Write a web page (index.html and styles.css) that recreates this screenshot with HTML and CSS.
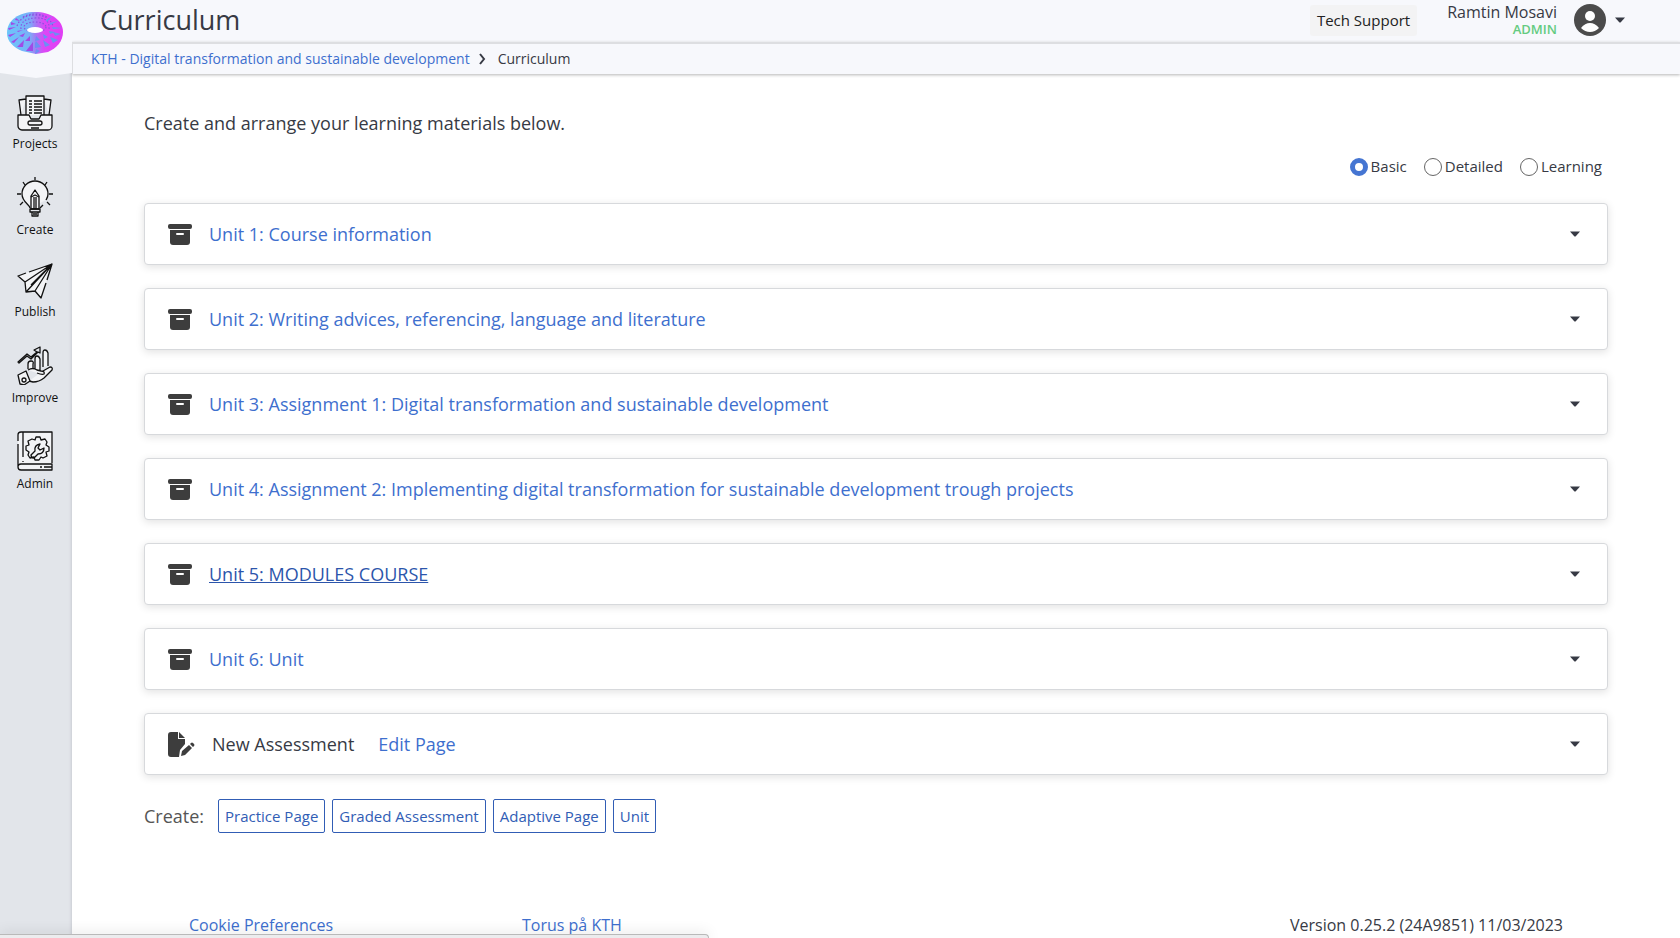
FILE: index.html
```html
<!DOCTYPE html>
<html lang="en">
<head>
<meta charset="utf-8">
<title>Curriculum</title>
<link rel="stylesheet" href="styles.css">
</head>
<body>
<svg class="sprite" aria-hidden="true">
  <symbol id="archive" viewBox="0 0 24 21"><rect x="0" y="0" width="24" height="5" rx="2"/><path d="M2 6h20v12a3 3 0 0 1-3 3H5a3 3 0 0 1-3-3z"/><rect class="slot" x="8" y="9" width="8" height="2" rx="1"/></symbol>
  <symbol id="caret" viewBox="0 0 10 6"><path d="M0 0.500h10L6 5Q5 6 4 5z"/></symbol>
</svg>
<div class="app">
  <aside class="sidebar">
    <a class="brand" href="#" aria-label="Home">
      <svg class="logo" viewBox="0 0 56 44">
        <defs>
          <linearGradient id="torus"><stop offset="0" stop-color="#6cc6fa"/><stop offset=".4" stop-color="#78b0f8"/><stop offset=".52" stop-color="#a877f4"/><stop offset=".66" stop-color="#dc48f6"/><stop offset="1" stop-color="#e23cf4"/></linearGradient>
        </defs>
        <path d="M28 1C44 1 56 9 56 21c0 9-6 16-15 20l-12 2-14-3C6 36 0 30 0 22 0 9 12 1 28 1z" fill="url(#torus)"/>
        <g fill="none" stroke="#8a52e0" stroke-width="1.200" stroke-dasharray="1.500 1.800">
          <ellipse cx="28" cy="16" rx="11" ry="5"/><path d="M14 18Q13 8 28 7t14 11M10 15Q14 4 28 4t18 11M16 6Q28 0 40 6"/>
        </g>
        <g fill="#a04ae6">
          <path d="M1 17l8-1-7 3zM1 24l8-2-6 4zM4 31l8-5-5 6zM10 36l7-7-1 7zM19 40l7-9v9zM12 25l6-3-2 4zM18 30l5-5v5zM10 20l6-1-5 2zM4 11l5 2-5 1zM9 7l4 3-5-1z"/>
        </g>
        <g fill="#6b8ff4">
          <path d="M28 32l1-2 5 6-6 1zM36 29l7 5-5 2zM43 26l8 3-5 3zM46 21l8 2-6 2zM29 25l4 4-5 1zM36 23l5 3-4 2zM42 20l6 1-5 2zM45 16l10 1-9 1zM43 12l8-2-8 4zM39 9l6-4-5 6zM29 38l4 2-5 3z"/>
        </g>
        <ellipse cx="28" cy="19" rx="8" ry="3" fill="#fff"/>
      </svg>
    </a>
    <nav class="nav">
      <a class="nav-item" href="#">
        <svg viewBox="0 0 36 36" class="line"><path class="pale" d="M9 20V1h18v19M9 4L2 5l2 15M27 4l7 1-2 15M1 20h11l2 4h8l2-4h11v11a4 4 0 0 1-4 4H5a4 4 0 0 1-4-4z"/><path d="M12 6h3M17 6h8M12 9h3M17 9h8M12 12h3M17 12h8M12 15h3M17 15h8M12 18h3M17 18h8M14 33h8"/><rect x="11" y="26" width="14" height="4" rx="2"/></svg>
        <span>Projects</span>
      </a>
      <a class="nav-item nav-create" href="#">
        <svg viewBox="0 0 36 40" class="line"><path class="pale" d="M13 31c0-3-8-6-8-14a13 13 0 0 1 26 0c0 3-1 4-2 6M26 28l-3 3"/><path d="M18 0v3M6 5l2 3M30 5l-2 3M0 17h4M32 17h4M3 28l3-3M33 28l-3-3"/><path class="pale" d="M14 32V19l4-6 4 6v13zM17 20v12M19 20v12"/><path d="M14 20l4-2 4 2M17 14h2M13 32h10v3H13zM15 35h6v4h-6zM16 37h4"/></svg>
        <span>Create</span>
      </a>
      <a class="nav-item nav-publish" href="#">
        <svg viewBox="0 0 36 36" class="line"><path class="pale" stroke="none" d="M35 1L1 13l7 6 1 10 9-1 6 7z"/><path d="M12 9L35 1 30 17M29 20l-5 15-6-7-9 1-1-10-7-6 8-3M35 1L8 19M35 1L9 29M35 1L18 28M35 1L14 22"/></svg>
        <span>Publish</span>
      </a>
      <a class="nav-item nav-improve" href="#">
        <svg viewBox="0 0 36 40" class="line"><path d="M1 17l9-8 4 3 6-5-3-2 6-3v6l-2-1-7 7-4-3-8 7z"/><path class="pale" d="M11 24v-5q0-3 3-3t2 3v5M18 24V14q0-3 2-3t3 3v11M26 22V8q0-3 2-3t3 3v13M11 25q5-3 9 0l4 1q4 0 3 3-2 1-7-1M26 26l7-4q3 0 2 3l-8 8q-5 4-11 4l-4-1"/><path class="pale" d="M1 30l8-4 4 10-6 4-4-1z"/><circle cx="7" cy="35" r="2"/></svg>
        <span>Improve</span>
      </a>
      <a class="nav-item nav-admin" href="#">
        <svg viewBox="0 0 36 40" class="line"><path class="pale" stroke="none" d="M35 1H4a3 3 0 0 0-3 3v32a3 3 0 0 0 3 3h31z"/><path d="M35 32V1H4a3 3 0 0 0-3 3v6M1 13v23a3 3 0 0 0 3 3h31v-6H4a3 3 0 0 0-3 3M6 1v25M6 30v1M23 36h2M27 36h8"/><path d="M19 6h4l1 3 4-1 2 3-1 3 3 2v4l-3 1 1 4-4 2-2-1-2 3h-4l-1-3-4 1-2-3 1-3-3-2v-4l3-1-1-4 4-2 3 1z"/><path d="M14 24l4-4q-1-6 5-7l-2 4 2 2 4-2q0 6-6 6l-4 4q-3 0-3-3z"/></svg>
        <span>Admin</span>
      </a>
    </nav>
  </aside>
  <div class="main">
    <header class="topbar">
      <h1 class="title">Curriculum</h1>
      <div class="account">
        <button class="support" type="button">Tech Support</button>
        <div class="who"><span class="name">Ramtin Mosavi</span><span class="role">ADMIN</span></div>
        <button class="avatar" type="button" aria-label="Account menu">
          <svg class="face" viewBox="0 0 32 32"><circle cx="16" cy="16" r="16" fill="#4b4b4b"/><circle cx="16" cy="12" r="5" fill="#fff"/><path d="M7 24Q11 19 16 19t9 5Q21 28 16 28t-9-4z" fill="#fff"/></svg>
          <svg class="caret"><use href="#caret"/></svg>
        </button>
      </div>
    </header>
    <nav class="crumbs" aria-label="Breadcrumb">
      <a href="#">KTH - Digital transformation and sustainable development</a>
      <svg class="chevron" viewBox="0 0 8 12"><path d="M2 1l4 5-4 5"/></svg>
      <span>Curriculum</span>
    </nav>
    <main class="content">
      <p class="intro">Create and arrange your learning materials below.</p>
      <div class="views">
        <label class="view"><input type="radio" name="view" checked>Basic</label>
        <label class="view"><input type="radio" name="view">Detailed</label>
        <label class="view"><input type="radio" name="view">Learning</label>
      </div>
      <div class="units">
        <div class="card"><svg class="box"><use href="#archive"/></svg><a href="#">Unit 1: Course information</a><button class="more" type="button" aria-label="Options"><svg class="caret"><use href="#caret"/></svg></button></div>
        <div class="card"><svg class="box"><use href="#archive"/></svg><a href="#">Unit 2: Writing advices, referencing, language and literature</a><button class="more" type="button" aria-label="Options"><svg class="caret"><use href="#caret"/></svg></button></div>
        <div class="card"><svg class="box"><use href="#archive"/></svg><a href="#">Unit 3: Assignment 1: Digital transformation and sustainable development</a><button class="more" type="button" aria-label="Options"><svg class="caret"><use href="#caret"/></svg></button></div>
        <div class="card"><svg class="box"><use href="#archive"/></svg><a href="#">Unit 4: Assignment 2: Implementing digital transformation for sustainable development trough projects</a><button class="more" type="button" aria-label="Options"><svg class="caret"><use href="#caret"/></svg></button></div>
        <div class="card"><svg class="box"><use href="#archive"/></svg><a class="hovered" href="#">Unit 5: MODULES COURSE</a><button class="more" type="button" aria-label="Options"><svg class="caret"><use href="#caret"/></svg></button></div>
        <div class="card"><svg class="box"><use href="#archive"/></svg><a href="#">Unit 6: Unit</a><button class="more" type="button" aria-label="Options"><svg class="caret"><use href="#caret"/></svg></button></div>
        <div class="card">
          <svg class="page" viewBox="0 0 27 25"><path d="M3 0h7v7h7v5l-5 6-1 7H3a3 3 0 0 1-3-3V3a3 3 0 0 1 3-3z"/><path d="M11 0l6 6h-6zM13 24l1-5 7-6 3 3-7 7zM22 12l1-1q1-1 2 0l1 1q1 1 0 2l-1 1z"/></svg>
          <span>New Assessment</span><a class="edit" href="#">Edit Page</a><button class="more" type="button" aria-label="Options"><svg class="caret"><use href="#caret"/></svg></button>
        </div>
      </div>
      <div class="create">
        <span class="create-label">Create:</span>
        <button type="button">Practice Page</button>
        <button type="button">Graded Assessment</button>
        <button type="button">Adaptive Page</button>
        <button type="button">Unit</button>
      </div>
    </main>
    <footer class="footer">
      <a href="#">Cookie Preferences</a>
      <a href="#">Torus på KTH</a>
      <span class="version">Version 0.25.2 (24A9851) 11/03/2023</span>
    </footer>
  </div>
</div>
<div class="statusbar"></div>
</body>
</html>
```
FILE: styles.css
```css
* { box-sizing: border-box; }
body { margin: 0; background: #fff; color: #373a44; font: 16px/24px "Open Sans", sans-serif; }
a { color: #3e6fce; text-decoration: none; }
button { font: inherit; color: inherit; cursor: pointer; }
svg { display: block; flex: none; }
.sprite { position: absolute; width: 0; height: 0; }
.app { display: flex; height: 100vh; overflow: hidden; }

.sidebar { width: 72px; flex: none; background: #e2e5ea; box-shadow: inset -3px 0 3px -2px #c9cdd3; }
.brand { display: flex; justify-content: center; height: 78px; padding: 11px 2px 0 0; background: #f7f8fc; clip-path: polygon(0 0, 100% 0, 100% 73px, 50% 100%, 0 73px); }
.logo { width: 56px; height: 44px; }
.nav { display: flex; flex-direction: column; padding: 17px 2px 0 0; }
.nav-item { display: flex; flex-direction: column; align-items: center; gap: 4px; padding-bottom: 24px; color: #111; font-size: 12px; line-height: 18px; }
.nav-item svg { width: 36px; height: 36px; }
.nav-item .line { fill: none; stroke: #111; stroke-width: 1.300; stroke-linejoin: round; }
.line .pale { fill: #f3f4f6; }
.nav-item.nav-create svg, .nav-item.nav-improve svg, .nav-item.nav-admin svg { height: 40px; }

.main { display: flex; flex-direction: column; flex: 1; min-width: 0; }
.topbar { display: flex; align-items: center; justify-content: space-between; height: 42px; padding: 0 55px 2px 28px; background: #f7f8fc; }
.title { margin: 0; font-size: 27px; line-height: 40px; font-weight: 400; }
.account { display: flex; align-items: center; }
.support { height: 31px; padding: 0 7px; border: 0; border-radius: 3px; background: #f3f3f4; color: #222; font-size: 15px; }
.who { display: flex; flex-direction: column; align-items: flex-end; margin: 0 17px 0 30px; line-height: 18px; }
.name { font-size: 16px; }
.role { font-size: 13px; line-height: 16px; font-weight: 600; color: #64cb80; }
.avatar { display: flex; align-items: center; gap: 9px; padding: 0; border: 0; background: none; }
.face { width: 32px; height: 32px; }
.caret { width: 10px; height: 6px; fill: #373a44; }

.crumbs { display: flex; align-items: center; height: 32px; padding-left: 18px; border-top: 2px solid #dddee1; border-left: 1px solid #dddee1; background: #f7f8fc; box-shadow: 0 1px 3px #b5b5b5; font-size: 14px; }
.chevron { width: 8px; height: 12px; margin: 0 12px 0 8px; fill: none; stroke: #373a44; stroke-width: 2; }

.content { padding: 37px 72px 0; }
.intro { margin: 0; font-size: 18px; }
.views { display: flex; justify-content: flex-end; gap: 17px; margin-top: 19px; padding-right: 6px; font-size: 15px; }
.view { display: flex; align-items: center; gap: 3px; }
.view input { appearance: none; width: 18px; height: 18px; margin: 2px 0 0; border: 1px solid #666; border-radius: 50%; background: #fff; }
.view input:checked { border: 5px solid #4575d2; }
.units { display: flex; flex-direction: column; gap: 23px; margin-top: 25px; font-size: 18px; }
.card { display: flex; align-items: center; height: 62px; padding: 0 27px 0 23px; border: 1px solid #d7d9dc; border-radius: 4px; background: #fff; box-shadow: 0 2px 8px #0000001f; }
.box { width: 24px; height: 21px; margin-right: 17px; fill: #3d3d3d; }
.slot { fill: #fff; }
.page { width: 27px; height: 25px; margin-right: 17px; fill: #3d3d3d; }
.hovered { color: #2c55ab; text-decoration: underline; }
.edit { margin-left: 24px; }
.more { margin-left: auto; padding: 0; border: 0; background: none; }
.create { display: flex; align-items: center; gap: 7px; margin-top: 24px; }
.create-label { margin-right: 7px; font-size: 18px; color: #555; }
.create button { height: 34px; padding: 0 6px; border: 1px solid #315db5; border-radius: 2px; background: #fff; color: #315db5; font-size: 15px; }
.footer { display: flex; flex: none; margin-top: auto; padding: 0 117px 1px; }
.footer a { width: 333px; }
.version { margin-left: auto; }

/* Edge of the browser's link preview */
.statusbar { position: fixed; left: 0; bottom: 0; width: 709px; height: 4px; border-top: 1px solid #b9b9b9; border-right: 1px solid #b9b9b9; border-top-right-radius: 4px; background: #ececee; box-shadow: 0 0 14px #00000030; }
```
